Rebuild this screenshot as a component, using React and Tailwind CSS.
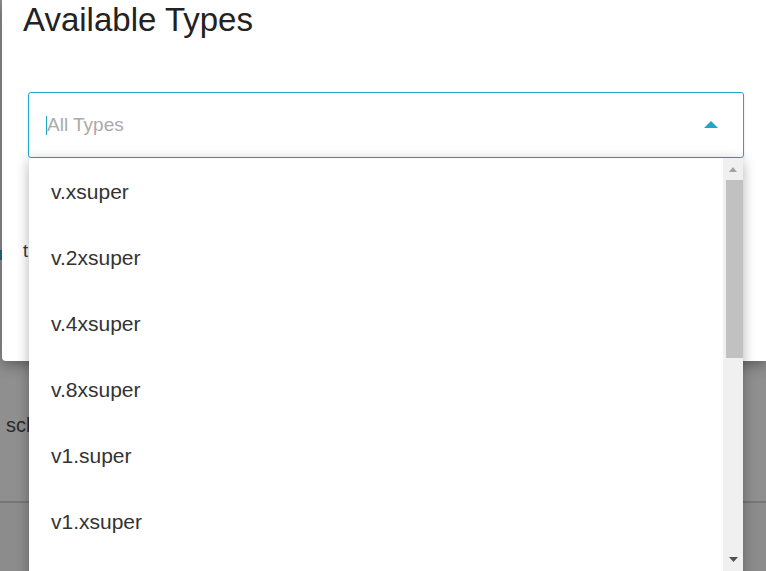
const types = ['v.xsuper', 'v.2xsuper', 'v.4xsuper', 'v.8xsuper', 'v1.super', 'v1.xsuper'];

export default function App() {
  return (
    <div className="relative w-[766px] h-[571px] overflow-hidden bg-[#8f8f8f] font-['Liberation_Sans',Arial,sans-serif]">
      {/* page behind the overlay */}
      <div className="flex flex-col h-full">
        <div className="h-[503px] border-b-2 border-[#767676] pt-[410px] pl-[6px] text-[#2a2a2a] text-[20px]">schedule</div>
        <div className="flex-1 bg-[#8c8c8c]" />
      </div>
      <div className="absolute left-0 top-[250px] w-[3px] h-[10px] bg-[#2a6b8a]" />

      {/* modal */}
      <div className="absolute left-[2px] top-0 right-0 h-[361px] bg-white rounded-bl-[4px] shadow-[0_4px_14px_rgba(0,0,0,0.35)]">
        <h1 className="pl-[21px] text-[33px] leading-[39px] text-[#222]">Available Types</h1>
        <div className="ml-[26px] mr-[22px] mt-[53px] h-[66px] border border-[#1fa8c6] rounded-[3px] shadow-[0_2px_3px_rgba(0,0,0,0.12)] flex items-center pl-[17px] pr-[25px]">
          <span className="w-px h-[19px] bg-[#1fa8c6]" />
          <span className="flex-1 text-[19px] text-[#aaa]">All Types</span>
          <svg width="14" height="8" viewBox="0 0 14 8">
            <path d="M0 7 L7 0 L14 7 Z" fill="#1fa8c6" />
          </svg>
        </div>
        <div className="pl-[21px] pt-[80px] text-[18px] text-[#333]">t</div>
      </div>

      {/* dropdown menu */}
      <div className="absolute left-[29px] top-[158px] w-[714px] h-[440px] bg-white shadow-[0_3px_12px_rgba(0,0,0,0.3)] flex">
        <ul className="flex-1 pt-[1px]">
          {types.map(t => (
            <li key={t} className="h-[66px] flex items-center pl-[22px] text-[21px] text-[#333]">{t}</li>
          ))}
        </ul>
        <div className="w-[20px] bg-[#f0f0f0] flex flex-col items-center">
          <svg className="mt-[9px]" width="8" height="5" viewBox="0 0 8 5">
            <path d="M0 5 L4 0 L8 5 Z" fill="#a3a3a3" />
          </svg>
          <div className="mt-[8px] ml-[2px] w-[17px] h-[178px] bg-[#c1c1c1]" />
        </div>
      </div>
      <div className="absolute left-[723px] top-[540px] w-[20px] h-[31px] bg-[#f0f0f0] flex justify-center">
        <svg className="mt-[17px]" width="9" height="5" viewBox="0 0 9 5">
          <path d="M0 0 L9 0 L4.5 5 Z" fill="#505050" />
        </svg>
      </div>
    </div>
  );
}
